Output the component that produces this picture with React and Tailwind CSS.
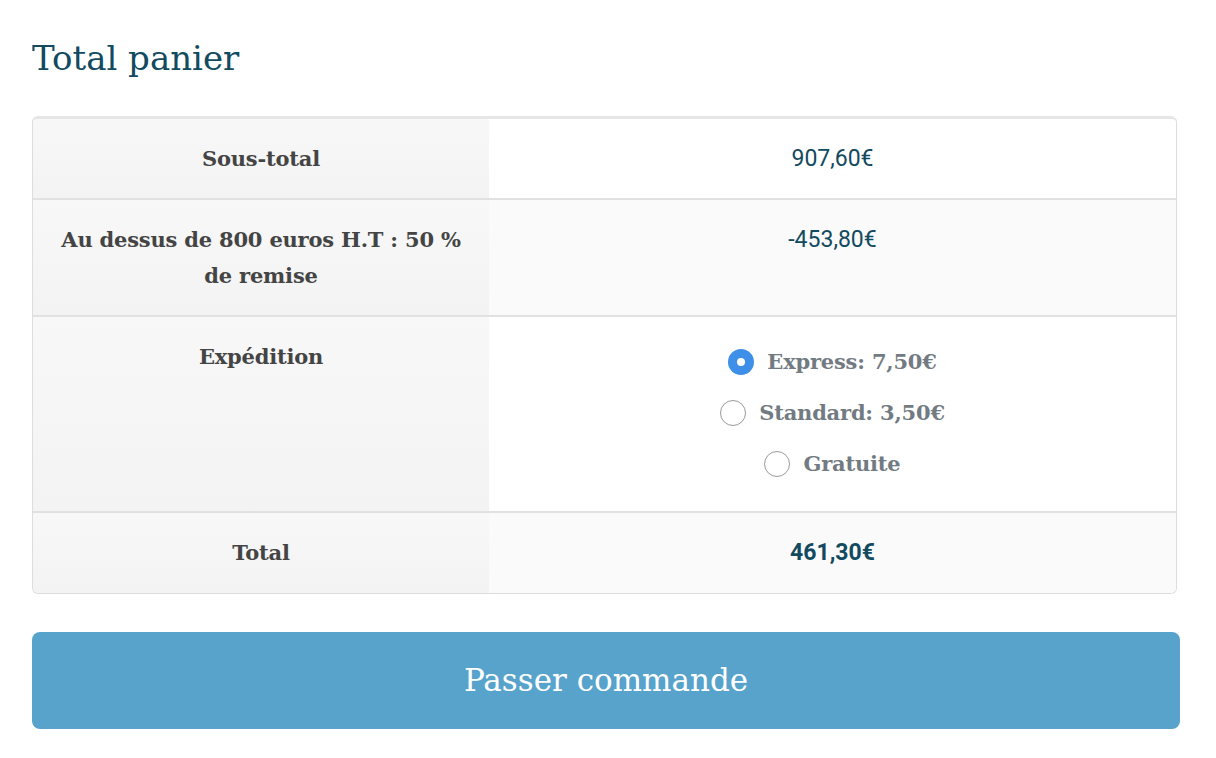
import React, { useState } from 'react'

const slab = "font-['DejaVu_Serif','Liberation_Serif',serif]"
const sans = "font-['Roboto','Liberation_Sans',sans-serif]"

const shipping = [
  { id: 'express', label: 'Express: 7,50€' },
  { id: 'standard', label: 'Standard: 3,50€' },
  { id: 'free', label: 'Gratuite' },
]

function Radio({ checked }) {
  if (checked) {
    return (
      <span className="flex h-[26px] w-[26px] items-center justify-center rounded-full bg-[#3d8fe8]">
        <span className="h-[8px] w-[8px] rounded-full bg-white"></span>
      </span>
    )
  }
  return <span className="h-[26px] w-[26px] rounded-full border border-[#9a9a9a] bg-white"></span>
}

function Row({ label, children, shaded, last }) {
  return (
    <div className={`flex ${last ? '' : 'border-b-2 border-[#e1e1e1]'}`}>
      <div className={`w-[456px] shrink-0 bg-gradient-to-b from-[#f8f8f8] to-[#f3f3f3] px-3 pt-[22px] ${last ? 'pb-[22px]' : 'pb-[21px]'} text-center`}>
        <span className={`${slab} text-[21px] font-bold leading-[36px] tracking-[-0.2px] text-[#444444]`}>{label}</span>
      </div>
      <div className={`flex-1 px-6 pt-[22px] ${last ? 'pb-[22px]' : 'pb-[21px]'} text-center ${shaded ? 'bg-[#fafafa]' : 'bg-white'}`}>
        {children}
      </div>
    </div>
  )
}

export default function App() {
  const [method, setMethod] = useState('express')

  return (
    <div className="min-h-screen bg-white pl-[32px] pt-[34px]">
      <div className="w-[1148px]">
        <h2 className={`${slab} text-[34px] font-normal leading-[48px] text-[#124a5f]`}>Total panier</h2>

        <div className="mt-[34px] w-[1145px] overflow-hidden rounded-[6px] border border-[#dddddd] border-t-[3px] border-t-[#e6e6e6]">
          <Row label="Sous-total">
            <span className={`${sans} text-[23px] leading-[36px] text-[#124a5f]`}>907,60€</span>
          </Row>
          <Row label="Au dessus de 800 euros H.T : 50 % de remise" shaded>
            <span className={`${sans} text-[23px] leading-[36px] text-[#124a5f]`}>-453,80€</span>
          </Row>
          <Row label="Expédition">
            <div className="flex flex-col items-center gap-[17px] pt-[6px] pb-[9px]">
              {shipping.map((s) => (
                <button
                  key={s.id}
                  onClick={() => setMethod(s.id)}
                  className="flex items-center gap-[13px]"
                >
                  <Radio checked={method === s.id} />
                  <span className={`${slab} text-[21px] font-bold leading-[34px] tracking-[-0.2px] text-[#727a82]`}>{s.label}</span>
                </button>
              ))}
            </div>
          </Row>
          <Row label="Total" shaded last>
            <span className={`${sans} text-[23px] font-bold leading-[36px] text-[#124a5f]`}>461,30€</span>
          </Row>
        </div>

        <button className="mt-[38px] flex h-[97px] w-full items-center justify-center rounded-[8px] bg-[#57a3cb]">
          <span className={`${slab} text-[31px] font-normal text-white`}>Passer commande</span>
        </button>
      </div>
    </div>
  )
}
